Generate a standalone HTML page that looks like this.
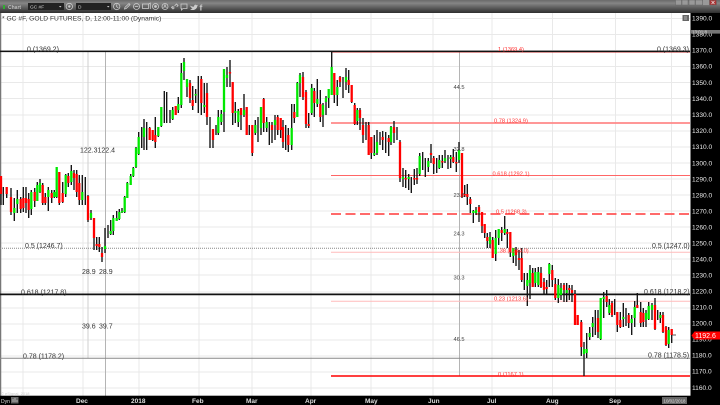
<!DOCTYPE html>
<html><head><meta charset="utf-8"><style>
html,body{margin:0;padding:0;background:#fff;width:720px;height:405px;overflow:hidden}
svg{display:block;filter:blur(.3px)}
text{font-family:"Liberation Sans",sans-serif}
.b{font-size:7px;fill:#333}
.s{font-size:5.7px;fill:#444}
.r{font-size:5.7px;fill:#f33}
.a{font-size:6.6px;fill:#e8e8e8}
.m{font-size:6.5px;fill:#ddd;font-weight:bold}
</style></head><body>
<svg width="720" height="405" viewBox="0 0 720 405" xmlns="http://www.w3.org/2000/svg">
<defs><linearGradient id="h" x1="0" y1="0" x2="0" y2="1"><stop offset="0" stop-color="#6a6a6a"/><stop offset=".25" stop-color="#858585"/><stop offset="1" stop-color="#2e2e2e"/></linearGradient></defs>
<rect width="720" height="405" fill="#fff"/>
<path stroke="#e9e9e9" stroke-width="1" fill="none" d="M1 18.5H690M1 34.5H690M1 50.5H690M1 66.5H690M1 82.5H690M1 98.5H690M1 115H690M1 131H690M1 147H690M1 163H690M1 179H690M1 195H690M1 211H690M1 227H690M1 243H690M1 259H690M1 275H690M1 292H690M1 308H690M1 324H690M1 340H690M1 356H690M1 372H690M1 388H690M23 13V396M83 13V396M139 13V396M199 13V396M252 13V396M311 13V396M371 13V396M433 13V396M492 13V396M552.5 13V396M615.5 13V396M671.5 13V396"/>
<path stroke="#777" stroke-width="1.3" d="M.6 13V396"/>
<path stroke="#cfcfcf" stroke-width="1" d="M88 52V358"/>
<path stroke="#b4b4b4" stroke-width="1" d="M105.5 52V396M459.5 52V376"/>
<!-- fib lines -->
<path stroke="#888" stroke-width="1" stroke-dasharray="1 1" d="M0 248.3H690"/>
<path stroke="#f88" stroke-width="1.8" d="M331 123H690"/>
<path stroke="#f66" stroke-width="1" d="M331 175.5H690"/>
<path stroke="#f55" stroke-width="1.8" stroke-dasharray="10 4.5" d="M331 214H690"/>
<path stroke="#fbb" stroke-width="1" d="M331 252.2H690M331 301.3H690"/>
<path stroke="#f00" stroke-width="1.5" d="M331 376H690"/>
<path stroke="#e33" stroke-width=".8" opacity=".6" d="M331 52.4H690"/>
<path stroke="#111" stroke-width="1.5" d="M0 51.4H690"/>
<path stroke="#111" stroke-width="1.8" d="M0 294.4H690"/>
<path stroke="#888" stroke-width="1" d="M0 358.2H690"/>
<!-- wicks -->
<path stroke="#111" stroke-width="1.35" fill="none" d="M1 176V205M3.3 187V205M6.7 187V198M11 188V215M14.3 198V221M17.3 190V213M20.7 197V213M23.3 187V212M26 187V213M28.7 193V218M31.3 190V215M34.7 188V207M37.3 182V201M40 179V193M42.7 183V205M45.3 193V205M48.3 187V211M51.7 190V203M54.3 190V198M56.7 167V198M59.3 172V205M62.7 182V203M65.7 174V197M68.3 173V187M71.3 165V185M74 170V190M76.7 170V197M79.3 175V205M82.3 175V205M85.3 177V205M88 195V222M91 210V220M94 218V250M96.7 237V250M99.3 237V252M102 247V262M105 228V253M108 225V238M110.7 220V235M113.3 215V235M116.7 211V221M119.3 209V220M122 208V213M124.7 196V213M127.3 182V198M130.7 174V185M133.3 167V177M136 147V168M138.7 132V155M141.7 127V148M144 119V150M146.7 122V150M149.7 127V140M152.7 130V141M155.3 117V148M158.3 127V137M161.3 107V127M164.3 91V123M166.7 92V123M170 110V123M172.7 107V120M175.7 106V115M178.3 97V113M181.3 63V108M184 58V80M187 79V97M190 80V103M192.7 86V110M195.7 89V103M198.3 76V113M201.3 76V115M204.3 83V113M207 83V125M210 117V148M213 129V148M216 125V135M218.3 110V135M221.3 110V125M224 69V132M227 67V87M230 60V87M232.7 82V125M235.3 102V123M238.3 109V127M241 108V130M244 94V117M246.7 107V135M249.3 125V135M252.3 125V156M255.3 120V135M258 117V142M261 107V135M263.7 98V132M266.7 117V132M269.3 122V145M272 122V143M275 115V140M277.7 115V135M280.7 118V138M283 120V148M285.7 125V150M288.3 128V152M291.7 104V150M294.3 104V123M297.3 82V117M300 73V97M303 72V100M306 90V128M308.7 113V128M311.7 84V115M314.3 88V117M317.3 79V107M320.3 90V122M323 103V127M326 96V115M328.7 89V108M331.7 52V95M334.3 73V103M337.3 80V106M340 76V87M343 77V98M346 68V90M348.7 70V93M351.7 85V103M354.7 103V125M357.3 108V125M360 108V130M363 118V143M366 122V140M368.7 122V155M371.3 137V159M374.3 135V156M377 130V155M380 132V145M382.7 131V150M385.7 132V153M388.7 135V156M391 126V145M394 121V143M397 127V140M400 140V182M403 168V187M405.7 170V188M408.7 174V190M411.3 177V193M414.3 169V185M417 168V184M419.7 153V176M422.7 152V170M425.3 158V177M428.3 158V172M431 144V163M433.7 156V174M436.7 158V173M439.3 155V169M442.3 155V168M445 150V163M448 155V169M450.7 155V168M453.3 149V163M456.3 152V172M459 142V163M462 153V198M464.7 185V197M467.3 184V205M470.3 197V213M473.3 210V223M476 207V215M479 205V222M482 212V233M484.7 224V238M487.3 233V248M490 232V248M492.7 237V258M495.7 230V261M498.7 229V245M501.7 227V241M504.7 216V235M507.3 229V248M510.3 232V257M513.3 248V263M516 247V266M519 250V270M521.7 248V282M524.3 273V290M527.3 273V306M530 265V299M532.7 268V287M535.3 268V287M538.3 267V287M541 267V288M544 278V295M546.7 280V295M549.3 263V287M552.3 265V287M555.3 278V300M558.3 279V303M561 283V300M564 283V302M566.7 283V302M569.3 285V300M572 285V302M575 290V325M577.7 315V325M581.3 320V356M584 342V376M586.7 333V358M589.7 327V340M592.7 317V337M595.3 310V335M598 310V338M600.7 298V340M603.7 292V318M606.7 290V307M609.3 299V315M612 301V317M614.7 299V315M617.3 312V332M620.3 312V328M623.3 303V327M626 308V326M628.7 313V328M631.7 315V335M634.7 301V327M637.3 293V308M640.7 302V327M643.3 308V327M646 310V327M648.7 302V320M652 303V320M655 298V330M657.7 310V320M660.3 312V323M663 312V333M666 326V346M668.7 327V348M671.7 329V343"/>
<path stroke="#555" stroke-width="1" d="M672 335H676"/>
<!-- green bodies -->
<path stroke="#00e800" stroke-width="2.3" fill="none" d="M14.3 208V213M17.3 199V204M31.3 192V209M37.3 185V201M40 183V192M48.3 190V197M54.3 192V197M56.7 167V197M65.7 175V194M71.3 171V182M82.3 192V200M91 213V218M105 246V249M110.7 231V234M113.3 218V231M116.7 218V221M119.3 212V219M122 211V212.5M124.7 197V212M127.3 183V198M130.7 176V185M133.3 168V176M136 148V167M138.7 137V154M144 128V137M158.3 127V136M161.3 107V126M172.7 110V119M178.3 104V110M181.3 73V105M184 62V71M187 79V87M195.7 94V95.5M204.3 105V107M218.3 117V133M221.3 114V122M224 69V112M227 75V78M235.3 111V113M238.3 111V122M244 110V115M255.3 125V133M261 107V128M266.7 122V128M275 120V125M291.7 128V145M297.3 83V117M300 75V83M311.7 88V113M317.3 99V104M323 105V115M326 98V102M328.7 89V98M331.7 67V95M337.3 87V95M346 77V82M357.3 110V121M374.3 153V155M377 142V153M391 127V142M403 177V179M408.7 177V179M419.7 156V174M428.3 161V167M439.3 160V168M445 158V161M450.7 157V159M459 150V160M473.3 211V213M476 210V213M490 237V244M495.7 238V254M498.7 229V238M504.7 229V233M513.3 248V256M527.3 280V286M530 270V283M535.3 272V283M538.3 272V285M549.3 264V274M558.3 285V298M561 288V295M566.7 290V293M584 349V354M586.7 349V353M589.7 333V337M592.7 323V327M600.7 298V339M603.7 297V299M609.3 305V313M623.3 317V319M631.7 319V323M634.7 307V318M646 313V320M648.7 306V319M652 305V310M660.3 315V318M668.7 330V344"/>
<!-- red bodies -->
<path stroke="#f00" stroke-width="2.3" fill="none" d="M1 176V194M6.7 187V194M11 197V212M20.7 199V209M23.3 198V208M26 198V203M28.7 199V210M34.7 192V201M42.7 185V203M45.3 197V203M51.7 193V198M59.3 172V203M62.7 193V202M68.3 176V183M74 173V178M76.7 174V192M79.3 183V200M88 196V220M94 218V238M96.7 244V246M99.3 244V247M102 253V257M149.7 128V140M152.7 130V140M155.3 135V142M175.7 106V115M190 83V98M192.7 100V106M201.3 79V103M207 93V117M213 129V140M230 72V73.5M232.7 82V113M241 108V115M246.7 107V135M252.3 125V153M263.7 99V123M272 125V130M277.7 117V130M280.7 118V130M283 127V142M288.3 135V145M294.3 112V118M303 77V97M306 92V124M308.7 124V126M314.3 91V103M320.3 104V117M334.3 73V95M340 77V82M348.7 80V85M351.7 85V102M354.7 105V124M360 110V118M363 125V135M368.7 125V155M371.3 137V153M382.7 137V140M388.7 138V142M394 127V133M400 142V178M405.7 178V179.5M414.3 178V179.5M417 178V179.5M431 153V155M433.7 158V164M442.3 161V162.5M453.3 157V162M456.3 162V163.5M462 153V197M464.7 194V195.5M467.3 194V197M470.3 199V204M479 207V212M482 212V226M484.7 224V233M487.3 237V241M492.7 240V258M501.7 230V233M507.3 232V234M510.3 232V252M516 250V255M519 258V260M521.7 258V280M532.7 273V287M541 273V287M544 282V290M546.7 287V289M552.3 270V280M555.3 284V298M564 285V290M569.3 288V290M572 290V293M575 294V325M577.7 315V325M581.3 322V347M598 318V332M606.7 296V302M612 303V315M617.3 312V325M620.3 320V327M628.7 315V323M637.3 305V308M640.7 312V323M643.3 313V322M655 305V329M663 315V332M666 327V345M671.7 329V335"/>
<!-- text: chart labels -->
<text x="2" y="20.5" class="b" style="font-size:6.7px">* GC #F, GOLD FUTURES, D, 12:00-11:00 (Dynamic)</text>
<text x="27" y="51.5" class="b">0 (1369.2)</text>
<text x="657" y="51.5" class="b">0 (1369.3)</text>
<text x="80" y="152.5" class="b">122.3122.4</text>
<text x="25" y="248" class="b">0.5 (1246.7)</text>
<text x="652" y="248" class="b">0.5 (1247.0)</text>
<text x="82" y="274" class="b">28.9</text><text x="99" y="274" class="b">28.9</text>
<text x="21" y="294.5" class="b">0.618 (1217.8)</text>
<text x="644" y="294" class="b">0.618 (1218.2)</text>
<text x="82" y="328.5" class="b">39.6</text><text x="99" y="328.5" class="b">39.7</text>
<text x="23" y="358.5" class="b">0.78 (1178.2)</text>
<text x="648" y="357.5" class="b">0.78 (1178.5)</text>
<text x="453.5" y="89" class="s">44.5</text>
<text x="453.5" y="151" class="s">32.8</text>
<text x="453.5" y="197" class="s">23.6</text>
<text x="453.5" y="235.5" class="s">24.3</text>
<text x="453.5" y="279.5" class="s">30.3</text>
<text x="453.5" y="341" class="s">46.5</text>
<text x="498" y="51" class="r">1 (1369.4)</text>
<text x="494" y="122.5" class="r">0.78 (1324.9)</text>
<text x="492.5" y="175.5" class="r">0.618 (1292.1)</text>
<text x="496" y="213.5" class="r">0.5 (1268.3)</text>
<text x="498" y="252.5" class="r">.38 (1244.0)</text>
<text x="494" y="300.5" class="r">0.23 (1213.6)</text>
<text x="498" y="376" class="r">0 (1167.1)</text>
<text x="1" y="395" style="font-size:4px;fill:#ccc">© eSignal, 2018</text>
<!-- right axis -->
<rect x="690.5" y="13" width="29.5" height="392" fill="#000"/>
<g class="a">
<text x="692" y="20.5" class="a">1390.0</text><text x="692" y="36.5" class="a">1380.0</text><text x="692" y="52.5" class="a">1370.0</text><text x="692" y="68.5" class="a">1360.0</text><text x="692" y="85" class="a">1350.0</text><text x="692" y="101" class="a">1340.0</text><text x="692" y="117" class="a">1330.0</text><text x="692" y="133" class="a">1320.0</text><text x="692" y="149" class="a">1310.0</text><text x="692" y="165.5" class="a">1300.0</text><text x="692" y="181.5" class="a">1290.0</text><text x="692" y="197.5" class="a">1280.0</text><text x="692" y="213.5" class="a">1270.0</text><text x="692" y="229.5" class="a">1260.0</text><text x="692" y="245.5" class="a">1250.0</text><text x="692" y="261.5" class="a">1240.0</text><text x="692" y="277.5" class="a">1230.0</text><text x="692" y="293.5" class="a">1220.0</text><text x="692" y="309.5" class="a">1210.0</text><text x="692" y="325.5" class="a">1200.0</text><text x="692" y="341.5" class="a">1190.0</text><text x="692" y="357.5" class="a">1180.0</text><text x="692" y="373.5" class="a">1170.0</text><text x="692" y="390" class="a">1160.0</text>
</g>
<rect x="691" y="30" width="29" height="3.6" fill="#777"/>
<text x="692" y="33.3" style="font-size:4.5px;fill:#ddd">13:01:8</text>
<rect x="682.5" y="15" width="6.5" height="6" fill="#666"/><path d="M684 17H687M684 19H687" stroke="#ccc" stroke-width=".7"/>
<path d="M691.5 335.5L694.5 331.5H720V339.5H694.5Z" fill="#f00"/>
<text x="695" y="338" style="font-size:7px;fill:#fff">1192.6</text>
<!-- bottom axis -->
<rect x="0" y="395.7" width="720" height="9.3" fill="#000"/>
<text x="1" y="403" style="font-size:5px;fill:#ddd">Dyn</text><rect x="11" y="397" width="7.5" height="6.5" fill="#666"/><path d="M13 402V399M15 402V398M17 402V400" stroke="#ccc" stroke-width=".7"/>
<text x="76" y="403" class="m">Dec</text><text x="131" y="403" class="m">2018</text><text x="192" y="403" class="m">Feb</text><text x="246" y="403" class="m">Mar</text><text x="305" y="403" class="m">Apr</text><text x="365" y="403" class="m">May</text><text x="428" y="403" class="m">Jun</text><text x="487" y="403" class="m">Jul</text><text x="546" y="403" class="m">Aug</text><text x="609" y="403" class="m">Sep</text>
<rect x="662" y="397" width="25" height="7" fill="#666"/><text x="663.5" y="402.5" style="font-size:4.4px;fill:#ddd">10/02/2018</text>
<!-- header -->
<rect x="0" y="0" width="720" height="13" fill="url(#h)"/>
<rect x="3" y="5" width="2" height="4" fill="#3a3"/>
<text x="8" y="8.8" style="font-size:5px;fill:#bbb;font-weight:bold">Chart</text>
<rect x="28" y="3" width="36" height="7" fill="#222"/><text x="30" y="8.6" style="font-size:4.8px;fill:#ccc">GC #F</text><path d="M59 6L61.5 6L60.2 7.5Z" fill="#ccc"/>
<circle cx="69.3" cy="6.5" r="3.2" fill="none" stroke="#ccc" stroke-width=".8"/><circle cx="69.3" cy="6.5" r="1.2" fill="#ccc"/>
<rect x="76" y="3" width="35" height="7" fill="#222"/><text x="78" y="8.6" style="font-size:4.8px;fill:#ccc">D</text><path d="M107 6L109.5 6L108.2 7.5Z" fill="#ccc"/>
<g fill="none" stroke="#ccc" stroke-width=".8">
<circle cx="116.7" cy="6.5" r="3.2"/><path d="M116.7 4.5V6.8L118.3 7.8"/>
<path d="M124.5 9L125 7.3L129 3.6L130 4.6L126.2 8.5Z"/>
<circle cx="136.5" cy="6.5" r="3"/><path d="M134.8 6.5H138.2"/>
<rect x="142.5" y="4" width="6" height="4.5"/><path d="M148.5 4L150.3 3V9"/>
<circle cx="155.5" cy="6.5" r="3"/><circle cx="155.5" cy="6.5" r="1" fill="#ccc"/>
<circle cx="165" cy="6.5" r="3"/><path d="M163.7 8L165 4.8L166.3 8"/>
<path d="M172 8.5L174 6.5M176 4.5L174.5 6M172.8 6.2L171.5 7.5L173 9L174.5 7.7M175.2 5.3L176.5 4L178 5.5L176.7 6.8"/>
<path d="M181 4H187V8.5H183L181.5 10V8.5H181Z"/>
</g>
<path d="M190 5.5C191.5 6.5 193 6.8 194 6.6C194 5 195.5 4 196.7 5.2L198 4.7L197.3 6C197.2 8.5 194.8 10.2 192.5 10C191.5 10 190.5 9.5 190 9.2C191 9.2 192 8.8 192.5 8.3C191.5 8.2 190.5 7 190 5.5Z" fill="#ccc"/>
<text x="199.5" y="10.3" style="font-size:8.5px;font-weight:bold;fill:#ccc">f</text>
<!-- window buttons -->
<g stroke="#666" stroke-width=".5"><rect x="675.5" y="0" width="6" height="5" fill="#999"/><rect x="682" y="0" width="6" height="5" fill="#999"/><rect x="689" y="0" width="6" height="5" fill="#999"/><rect x="695.5" y="0" width="7" height="5" fill="#999"/><rect x="709.5" y="0" width="7" height="5" fill="#a33"/></g>
<rect x="703" y="0" width="6" height="5" fill="#999"/>
<path d="M711.5 1L714.5 4M714.5 1L711.5 4" stroke="#eee" stroke-width=".7"/>
</svg>
</body></html>
